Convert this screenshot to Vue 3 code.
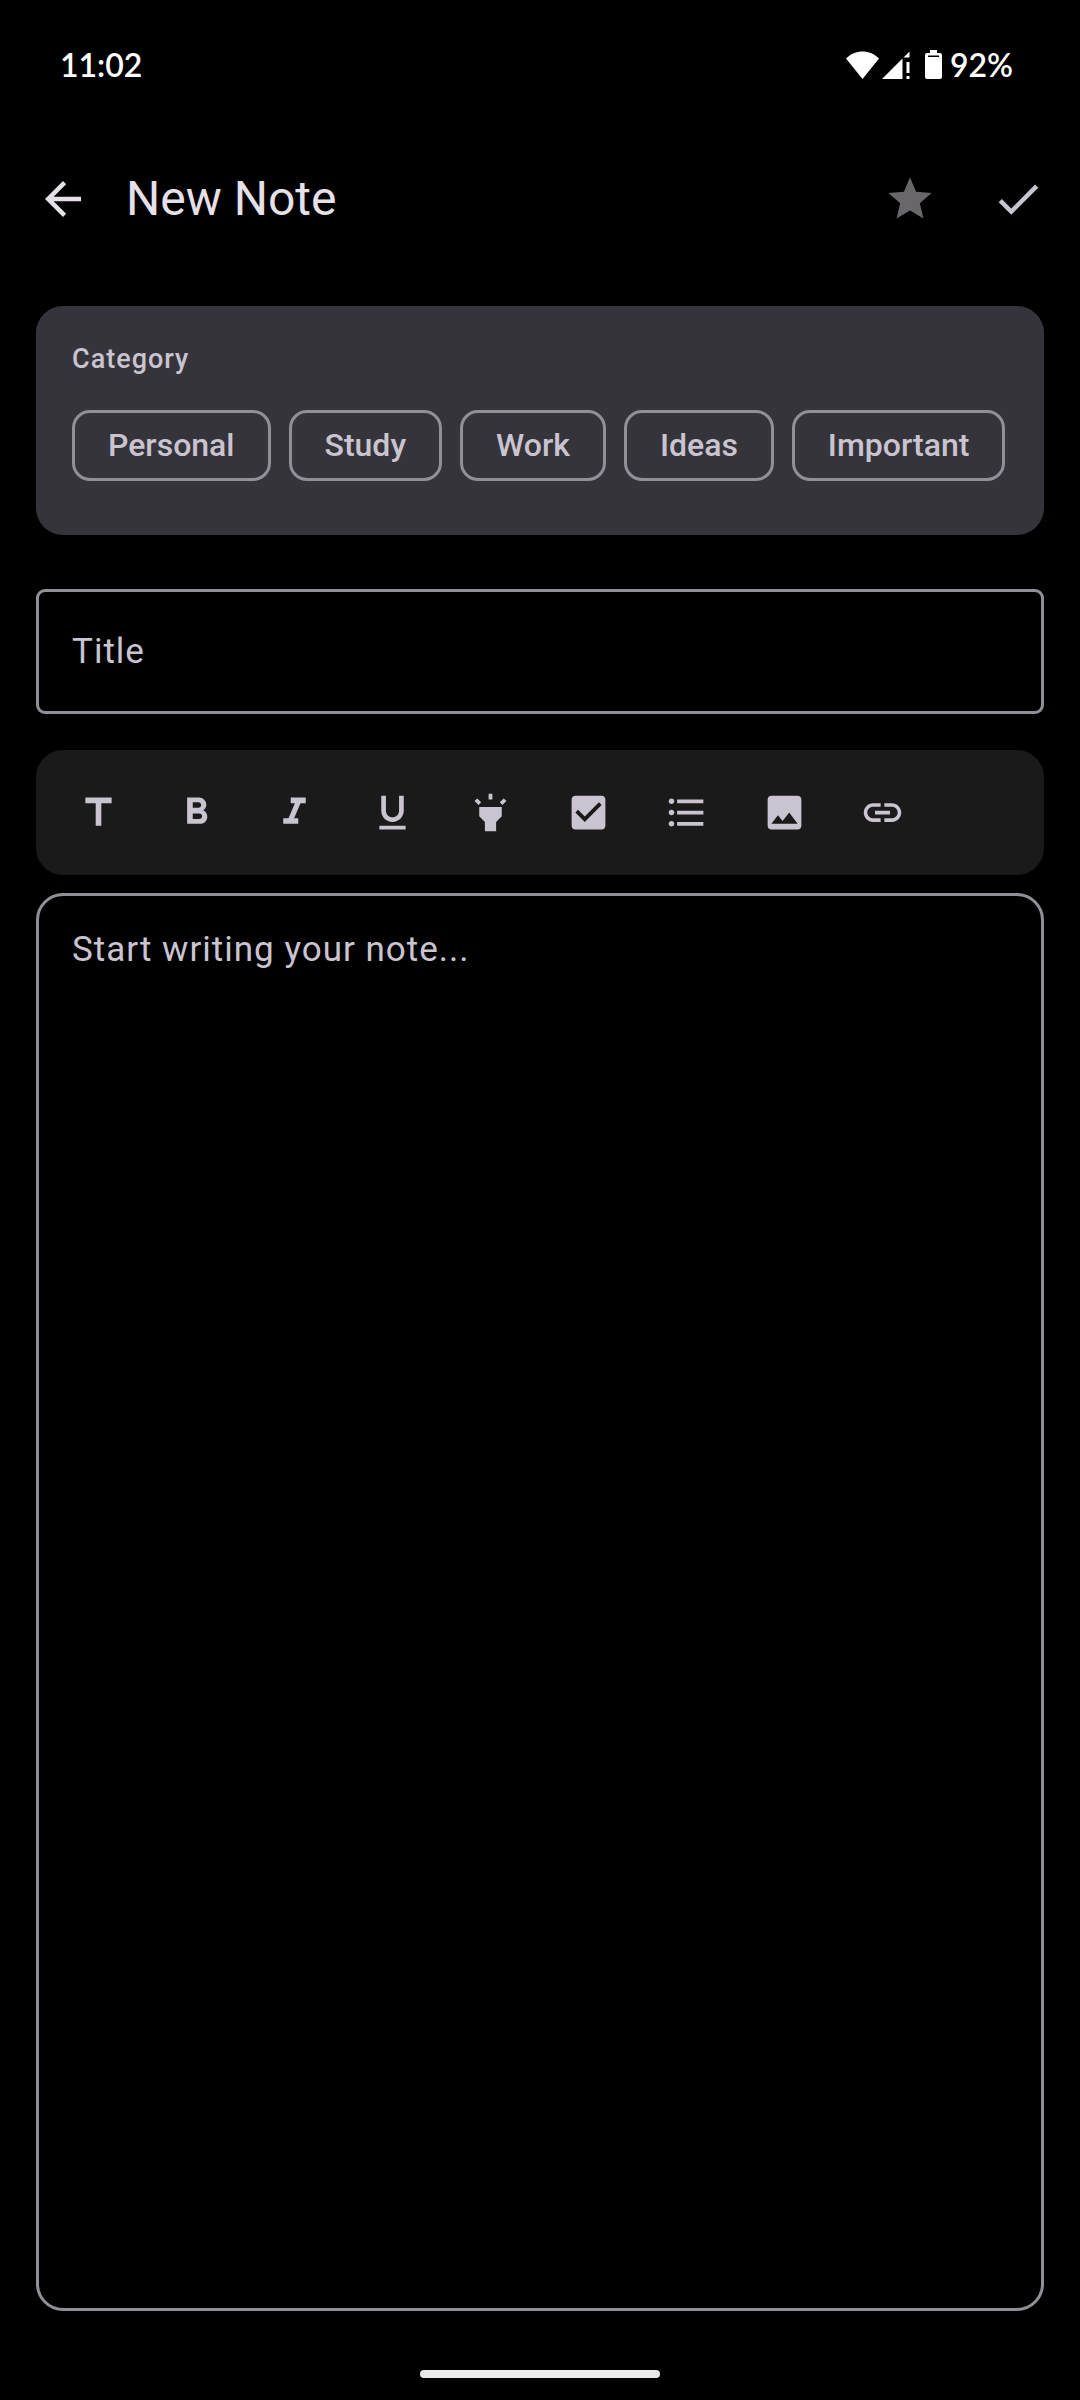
<script setup>
import { ref } from 'vue'

const categories = ['Personal', 'Study', 'Work', 'Ideas', 'Important']
const selected = ref('')
const title = ref('')
const body = ref('')

const tools = [
  { name: 'Heading', path: 'M5 4v3h5.5v12h3V7H19V4z' },
  { name: 'Bold', path: 'M15.6 10.79c.97-.67 1.65-1.77 1.65-2.79 0-2.26-1.75-4-4-4H7v14h7.04c2.09 0 3.71-1.7 3.71-3.79 0-1.52-.86-2.82-2.15-3.42zM10 6.5h3c.83 0 1.5.67 1.5 1.5s-.67 1.5-1.5 1.5h-3v-3zm3.5 9H10v-3h3.5c.83 0 1.5.67 1.5 1.5s-.67 1.5-1.5 1.5z' },
  { name: 'Italic', path: 'M10 4v3h2.21l-3.42 8H6v3h8v-3h-2.21l3.42-8H18V4z' },
  { name: 'Underline', path: 'M12 17c3.31 0 6-2.69 6-6V3h-2.5v8c0 1.93-1.57 3.5-3.5 3.5S8.5 12.93 8.5 11V3H6v8c0 3.31 2.69 6 6 6zm-7 2v2h14v-2H5z' },
  { name: 'Highlight', path: 'M6 14l3 3v5h6v-5l3-3V9H6v5zm5-12h2v3h-2V2zM3.5 5.88l1.41-1.41 2.12 2.12L5.62 8 3.5 5.88zm13.46.71l2.12-2.12 1.41 1.41L18.38 8l-1.42-1.41z' },
  { name: 'Checklist', path: 'M19 3H5c-1.11 0-2 .9-2 2v14c0 1.1.89 2 2 2h14c1.11 0 2-.9 2-2V5c0-1.1-.89-2-2-2zm-9 14l-5-5 1.41-1.41L10 14.17l7.59-7.59L19 8l-9 9z' },
  { name: 'Bulleted list', path: 'M4 10.5c-.83 0-1.5.67-1.5 1.5s.67 1.5 1.5 1.5 1.5-.67 1.5-1.5-.67-1.5-1.5-1.5zm0-6c-.83 0-1.5.67-1.5 1.5S3.17 7.5 4 7.5 5.5 6.83 5.5 6 4.83 4.5 4 4.5zm0 12c-.83 0-1.5.68-1.5 1.5s.68 1.5 1.5 1.5 1.5-.68 1.5-1.5-.67-1.5-1.5-1.5zM7 19h14v-2H7v2zm0-6h14v-2H7v2zm0-8v2h14V5H7z' },
  { name: 'Image', path: 'M21 19V5c0-1.1-.9-2-2-2H5c-1.1 0-2 .9-2 2v14c0 1.1.9 2 2 2h14c1.1 0 2-.9 2-2zM8.5 13.5l2.5 3.01L14.5 12l4.5 6H5l3.5-4.5z' },
  { name: 'Link', path: 'M3.9 12c0-1.71 1.39-3.1 3.1-3.1h4V7H7c-2.76 0-5 2.24-5 5s2.24 5 5 5h4v-1.9H7c-1.71 0-3.1-1.39-3.1-3.1zM8 13h8v-2H8v2zm9-6h-4v1.9h4c1.71 0 3.1 1.39 3.1 3.1s-1.39 3.1-3.1 3.1h-4V17h4c2.76 0 5-2.24 5-5s-2.24-5-5-5z' },
]
</script>

<template>
  <div class="screen">
    <div class="status">
      <span>11:02</span>
      <div class="indicators">
        <svg class="wifi" width="33" height="28" viewBox="0 0 33 28" aria-hidden="true">
          <path d="M0 7.5C4.500 3 10.500.5 16.500.5S28.500 3 33 7.500L16.500 28z" />
        </svg>
        <svg class="signal" width="28" height="28" viewBox="0 0 28 28" aria-hidden="true">
          <path d="M0 28L20.500 7.500V28zM21.500 6.500L27.500.5V6.500zM24.500 11h3v11h-3zM24.500 25h3v3h-3z" />
        </svg>
        <svg class="battery" width="17" height="29" viewBox="0 0 17 29" aria-hidden="true">
          <path fill-rule="evenodd" d="M5 0h7v3h3a2 2 0 0 1 2 2v22a2 2 0 0 1-2 2H2a2 2 0 0 1-2-2V5a2 2 0 0 1 2-2h3zM3 5.500v1.500h11V5.500z" />
        </svg>
        <span>92%</span>
      </div>
    </div>

    <header class="app-bar">
      <button class="icon-button back" type="button" aria-label="Back">
        <svg viewBox="0 0 24 24"><path d="M20 11H7.830l5.590-5.590L12 4l-8 8 8 8 1.410-1.410L7.830 13H20v-2z" /></svg>
      </button>
      <h1>New Note</h1>
      <button class="icon-button star" type="button" aria-label="Favorite">
        <svg viewBox="0 0 24 24"><path d="M12 17.270L18.180 21l-1.640-7.030L22 9.240l-7.190-.61L12 2 9.190 8.630 2 9.240l5.460 4.730L5.820 21z" /></svg>
      </button>
      <button class="icon-button" type="button" aria-label="Save">
        <svg viewBox="0 0 24 24"><path d="M9 16.170L4.830 12l-1.420 1.410L9 19 21 7l-1.410-1.410z" /></svg>
      </button>
    </header>

    <main>
      <section class="category" aria-labelledby="category-label">
        <h2 id="category-label">Category</h2>
        <div class="chips">
          <button
            v-for="name in categories"
            :key="name"
            class="chip"
            type="button"
            :aria-pressed="selected === name"
            @click="selected = name"
          >{{ name }}</button>
        </div>
      </section>

      <input v-model="title" class="title-field" type="text" placeholder="Title" aria-label="Title">

      <div class="toolbar" role="toolbar" aria-label="Formatting">
        <button v-for="tool in tools" :key="tool.name" class="tool" type="button" :aria-label="tool.name">
          <svg viewBox="0 0 24 24"><path :d="tool.path" /></svg>
        </button>
      </div>

      <textarea v-model="body" class="editor" placeholder="Start writing your note..." aria-label="Note"></textarea>
    </main>

    <footer class="nav"><div class="pill"></div></footer>
  </div>
</template>

<style>
body {
  margin: 0;
  background: #000;
}
</style>

<style scoped>
.screen {
  box-sizing: border-box;
  min-height: 100vh;
  display: flex;
  flex-direction: column;
  background: #000;
  color: #cac4d0;
  font-family: Roboto, "Liberation Sans", sans-serif;
}

svg {
  display: block;
  fill: currentColor;
}

button {
  padding: 0;
  border: 0;
  background: none;
  color: inherit;
  font: inherit;
  cursor: pointer;
}

.status {
  height: 126px;
  box-sizing: border-box;
  padding: 3px 67px 0 60px;
  display: flex;
  align-items: center;
  justify-content: space-between;
  color: #fff;
  font: 600 32px/36px Lato, Roboto, sans-serif;
}

.indicators {
  display: flex;
  align-items: center;
}

.signal {
  margin-left: 3px;
}

.battery {
  margin: 0 8px 0 15px;
}

.app-bar {
  height: 144px;
  box-sizing: border-box;
  padding: 1px 8px 0 9px;
  display: flex;
  align-items: center;
}

.icon-button {
  width: 108px;
  height: 108px;
  flex: none;
  display: grid;
  place-items: center;
}

.icon-button svg {
  width: 54px;
  height: 54px;
}

.back {
  color: #e6e0e9;
}

.star {
  color: #69666c;
}

.icon-button.star svg {
  width: 52px;
  height: 52px;
}

h1 {
  flex: 1;
  margin: 0 0 0 9px;
  color: #e6e0e9;
  font-size: 48px;
  font-weight: 400;
  line-height: 63px;
}

main {
  flex: 1;
  display: flex;
  flex-direction: column;
  padding: 36px;
}

.category {
  padding: 36px 36px 54px;
  border-radius: 27px;
  background: #36343b;
}

h2 {
  margin: 0 0 34px;
  font-size: 27px;
  font-weight: 500;
  line-height: 34px;
  letter-spacing: 1px;
}

.chips {
  display: flex;
  gap: 18px;
}

.chip {
  height: 71px;
  padding: 0 33px;
  border: 3px solid #938f99;
  border-radius: 18px;
  font-size: 32px;
  font-weight: 500;
  line-height: 45px;
  white-space: nowrap;
}

.title-field,
.editor {
  box-sizing: border-box;
  width: 100%;
  border: 3px solid #938f99;
  outline: none;
  background: transparent;
  color: #e6e0e9;
  font-family: inherit;
  font-size: 35px;
  line-height: 54px;
  letter-spacing: 1px;
}

.title-field {
  height: 125px;
  margin-top: 54px;
  padding: 0 33px;
  border-radius: 9px;
}

.editor {
  flex: 1;
  margin-top: 18px;
  padding: 27px 33px;
  border-radius: 27px;
  resize: none;
}

::placeholder {
  color: #cac4d0;
  opacity: 1;
}

.toolbar {
  height: 125px;
  box-sizing: border-box;
  margin-top: 36px;
  padding: 0 18px;
  display: flex;
  align-items: center;
  gap: 10px;
  border-radius: 27px;
  background: #1a1a1a;
}

.tool {
  width: 88px;
  height: 88px;
  flex: none;
  display: grid;
  place-items: center;
}

.tool svg {
  width: 45px;
  height: 45px;
}

.nav {
  height: 53px;
  display: grid;
  place-items: center;
}

.pill {
  width: 240px;
  height: 8px;
  border-radius: 4px;
  background: #ebebeb;
}
</style>
